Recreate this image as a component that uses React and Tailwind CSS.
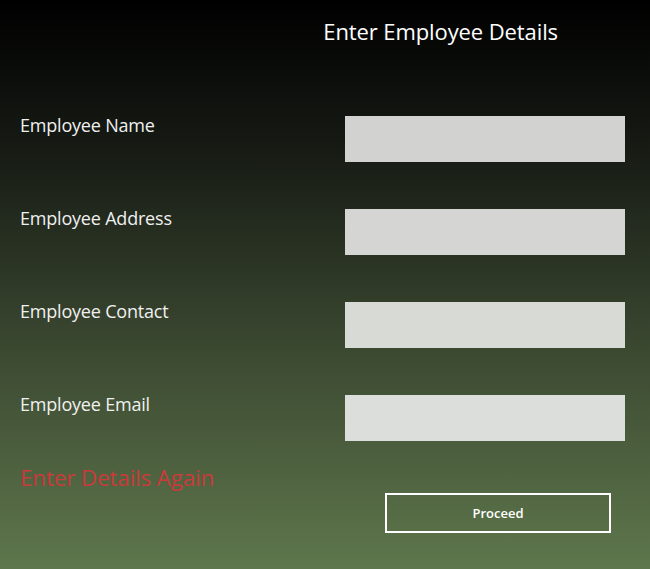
export default function App() {
  const rows = [
    { label: "Employee Name", bg: "bg-[#d2d2d0]" },
    { label: "Employee Address", bg: "bg-[#d5d6d3]" },
    { label: "Employee Contact", bg: "bg-[#d8dad6]" },
    { label: "Employee Email", bg: "bg-[#dbdeda]" },
  ];
  return (
    <div
      className="w-[650px] h-[569px] overflow-hidden bg-[linear-gradient(to_bottom,#000000_0%,#1a1f17_30%,#3a4730_60%,#5e774c_100%)] text-white"
      style={{ fontFamily: '"Open Sans", "Noto Sans", sans-serif' }}
    >
      <div className="flex justify-end pr-[92px] pt-[15px]">
        <h1 className="text-[22px] leading-[32px] text-white tracking-[-0.1px]">Enter Employee Details</h1>
      </div>
      <div className="flex flex-col gap-[47px] mt-[69px] pl-[20px] pr-[25px]">
        {rows.map((r) => (
          <div key={r.label} className="flex justify-between items-start">
            <span className="text-[18px] leading-[22px] mt-[-2px] text-[#f0f0f0] tracking-[-0.2px]">{r.label}</span>
            <div className={`w-[280px] h-[46px] ${r.bg}`} />
          </div>
        ))}
      </div>
      <div className="pl-[20px] mt-[23px] text-[22.5px] leading-[28px] text-[#c93a3b] tracking-[-0.2px]">Enter Details Again</div>
      <div className="flex justify-end pr-[39px] mt-[1px]">
        <button className="w-[226px] h-[40px] border-2 border-white text-[13px] font-semibold text-white pt-[2px]">Proceed</button>
      </div>
    </div>
  );
}
